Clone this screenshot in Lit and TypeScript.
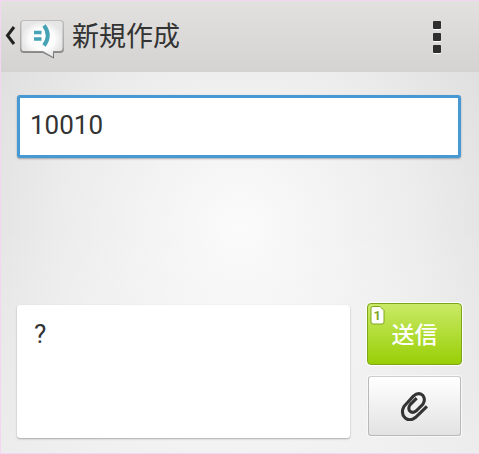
import { LitElement, html, css } from "lit";
import { customElement, state } from "lit/decorators.js";

@customElement("app-root")
export class AppRoot extends LitElement {
  @state() private recipient = "10010";
  @state() private message = "?";

  static styles = css`
    :host {
      display: block;
      font-family: Roboto, "Noto Sans CJK JP", sans-serif;
      color: #333;
    }
    * {
      box-sizing: border-box;
    }
    .screen {
      display: flex;
      flex-direction: column;
      min-height: 100vh;
      border: 1px solid #f3d7f0;
      border-right: 0;
      background:
        linear-gradient(transparent 50%, rgba(255, 255, 255, 0.5)),
        radial-gradient(circle at 50% 50%, #fbfbfb 0%, #ececec 55%, #dadada 100%);
    }
    header {
      display: flex;
      align-items: center;
      height: 71px;
      padding: 0 33px 0 4px;
      background: linear-gradient(#e2e1e0, #d4d3d1);
    }
    button {
      margin: 0;
      padding: 0;
      border: 0;
      background: none;
      font: inherit;
      color: inherit;
    }
    svg {
      display: block;
    }
    .back {
      display: flex;
      align-items: center;
    }
    h1 {
      flex: 1;
      margin: 0 0 0 7px;
      font-size: 27px;
      line-height: 40px;
      font-weight: 400;
    }
    .more {
      display: flex;
      flex-direction: column;
      gap: 4px;
      padding: 0 5px;
    }
    .dot {
      width: 8px;
      height: 8px;
      border-radius: 1px;
      background: #2e2e2e;
      box-shadow: 0 1px 1px #fff;
    }
    main {
      flex: 1;
      display: flex;
      flex-direction: column;
      justify-content: space-between;
      gap: 24px;
      padding: 23px 17px 15px 16px;
    }
    .field {
      display: block;
      width: 100%;
      margin: 0;
      border: 0;
      outline: 0;
      border-radius: 3px;
      background: #fff;
      color: #333;
      font: 26px/32px Roboto, "Noto Sans CJK JP", sans-serif;
      box-shadow: 0 1px 2px rgba(0, 0, 0, 0.3);
    }
    .recipient {
      width: calc(100% - 1px);
      height: 63px;
      padding: 0 10px 3px;
      border: 3px solid #4799d3;
    }
    .compose {
      display: flex;
      gap: 17px;
    }
    .message {
      flex: 1;
      min-width: 0;
      height: 133px;
      margin-top: 2px;
      padding: 13px 17px;
      resize: none;
    }
    .actions {
      display: flex;
      flex-direction: column;
      gap: 11px;
      width: 95px;
    }
    .send {
      position: relative;
      height: 62px;
      padding-top: 3px;
      border: 1px solid #7da51a;
      border-radius: 4px;
      background: linear-gradient(#c9ea66, #99cf06);
      box-shadow: 0 0 0 1px #fff;
      color: #fff;
      font-size: 23px;
      line-height: 32px;
      font-weight: 500;
    }
    .sim {
      position: absolute;
      left: 2px;
      top: 2px;
    }
    .sim text {
      font: 700 13px Roboto, sans-serif;
      fill: #7fa51c;
    }
    .attach {
      display: flex;
      align-items: center;
      justify-content: center;
      height: 60px;
      margin: 0 1px;
      border: 1px solid #b9b9b9;
      border-top-color: #cdcdcd;
      border-radius: 3px;
      background: linear-gradient(#fff, #e2e2e2);
      box-shadow: 0 0 0 1px #f8f8f8;
    }
  `;

  render() {
    return html`
      <div class="screen">
        <header>
          <button class="back" aria-label="戻る">
            <svg width="60" height="45" viewBox="5 14 60 45" fill="none">
              <defs>
                <radialGradient id="face">
                  <stop stop-color="#ffffff" />
                  <stop offset="0.6" stop-color="#fcfcfc" />
                  <stop offset="1" stop-color="#e6e6e6" />
                </radialGradient>
                <linearGradient id="rim" x2="0" y2="1">
                  <stop stop-color="#bdbdbd" />
                  <stop offset="0.7" stop-color="#a8a8a8" />
                  <stop offset="1" stop-color="#666666" />
                </linearGradient>
              </defs>
              <path d="M14 27L7.500 35.500L14 44" stroke="#222" stroke-width="3" />
              <path
                d="M24 20h36q4 0 4 4v25q0 4-4 4h-6v5.500L43 53H24q-4 0-4-4V24q0-4 4-4z"
                fill="url(#rim)"
              />
              <path
                d="M24 21h36q2.500 0 2.500 2.500V48q0 3-3 3H53v6L43 51H24q-2.500 0-2.500-2.500V24q0-3 2.500-3z"
                fill="url(#face)"
              />
              <path d="M34 32.500h7.500M34 39h7.500" stroke="#46a3b6" stroke-width="3.500" />
              <path d="M44 25.500Q51.500 35.500 44 45.500" stroke="#46a3b6" stroke-width="4" />
            </svg>
          </button>
          <h1>新規作成</h1>
          <button class="more" aria-label="メニュー">
            <span class="dot"></span><span class="dot"></span><span class="dot"></span>
          </button>
        </header>
        <main>
          <input
            class="field recipient"
            type="text"
            aria-label="宛先"
            .value=${this.recipient}
            @input=${(e: Event) => (this.recipient = (e.target as HTMLInputElement).value)}
          />
          <div class="compose">
            <textarea
              class="field message"
              aria-label="メッセージ"
              .value=${this.message}
              @input=${(e: Event) => (this.message = (e.target as HTMLTextAreaElement).value)}
            ></textarea>
            <div class="actions">
              <button class="send">
                <svg class="sim" width="15" height="19" viewBox="0 0 15 19">
                  <path
                    d="M3 .5h7l4 4V16q0 2-2 2H3q-2 0-2-2V2.500q0-2 2-2z"
                    fill="#fff"
                    stroke="#7fa51c"
                  />
                  <text x="3.500" y="14">1</text>
                </svg>
                送信
              </button>
              <button class="attach" aria-label="添付">
                <svg width="30" height="30" viewBox="31 21 88 88" fill="none" stroke="#333" stroke-width="9">
                  <path
                    d="M110 66L77 98Q60 112 46 100Q32 86 43 66L70 36Q85 23 98 34Q107 46 98 60L78 80Q67 88 59 79Q54 70 61 61L80 42"
                  />
                </svg>
              </button>
            </div>
          </div>
        </main>
      </div>
    `;
  }
}
